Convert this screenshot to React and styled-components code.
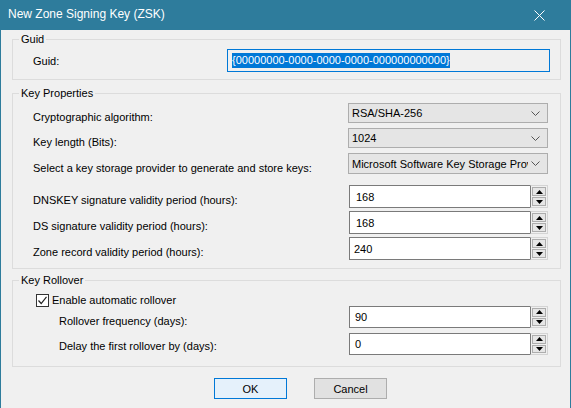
import React from "react";
import styled, { createGlobalStyle } from "styled-components";

const GlobalStyle = createGlobalStyle`
  html, body {
    margin: 0;
    padding: 0;
    background: #f0f0f0;
  }
  body {
    font-family: "Liberation Sans", Arial, sans-serif;
    font-size: 11px;
    color: #000;
  }
`;

const Window = styled.div`
  width: 571px;
  height: 408px;
  box-sizing: border-box;
  background: #f0f0f0;
  border-left: 1px solid #2e7c9c;
  border-right: 1px solid #2e7c9c;
  display: flex;
  flex-direction: column;
  overflow: hidden;
`;

const TitleBar = styled.div`
  height: 30px;
  flex: none;
  background: #2e7c9c;
  color: #fff;
  display: flex;
  align-items: center;
  justify-content: space-between;
  padding: 0 25px 0 7px;
  font-size: 12px;

  .title {
    padding-bottom: 3px;
  }
`;

const Body = styled.div`
  padding: 2px 9px 0 11px;
  display: flex;
  flex-direction: column;
`;

const Group = styled.fieldset`
  margin: ${(p) => p.$mt || 0}px 0 0;
  padding: ${(p) => p.$pt}px ${(p) => p.$pr}px ${(p) => p.$pb}px 20px;
  border: 1px solid #dcdcdc;
  min-width: 0;
  display: flex;
  flex-direction: column;
`;

const Legend = styled.legend`
  margin-left: -14px;
  padding: 0 2px;
  line-height: 14px;
  font-size: 11px;
`;

const Row = styled.div`
  display: flex;
  align-items: center;
  height: ${(p) => p.$h}px;
  margin-top: ${(p) => p.$mt || 0}px;
`;

const Label = styled.span`
  flex: 1;
  white-space: nowrap;
  padding-top: ${(p) => p.$shift || 0}px;
  padding-left: ${(p) => p.$indent || 0}px;
`;

const GuidField = styled.div`
  width: 323px;
  height: 100%;
  box-sizing: border-box;
  border: 1px solid #0078d7;
  background: #f0f0f0;
  display: flex;
  align-items: center;
  padding-left: 4px;

  span {
    background: #0078d7;
    color: #fff;
    line-height: 15px;
  }
`;

const Combo = styled.div`
  width: 200px;
  height: 100%;
  box-sizing: border-box;
  border: 1px solid #adadad;
  background: #e5e5e5;
  display: flex;
  align-items: center;
  padding: 0 7px 0 3px;

  .value {
    flex: 1;
    overflow: hidden;
    white-space: nowrap;
    margin-right: 3px;
  }
`;

const Spin = styled.div`
  width: 199px;
  height: 100%;
  display: flex;
`;

const SpinField = styled.div`
  flex: 1;
  box-sizing: border-box;
  background: #fff;
  border: 1px solid #7a7a7a;
  border-right: none;
  display: flex;
  align-items: center;
  padding-left: ${(p) => p.$pl || 6}px;
`;

const SpinButtons = styled.div`
  width: 18px;
  box-sizing: border-box;
  border: 1px solid #d4d4d4;
  border-left: 1px solid #7a7a7a;
  background: #f0f0f0;
  display: flex;
  flex-direction: column;
  gap: 1px;
  padding: 1px;
`;

const SpinButton = styled.div`
  flex: 1;
  border: 1px solid #adadad;
  background: #e6e6e6;
  display: flex;
  align-items: center;
  justify-content: center;
`;

const CheckRow = styled.label`
  display: flex;
  align-items: center;
  gap: 3px;
  height: 12px;
  margin: 7px 0 0 3px;
`;

const CheckBox = styled.span`
  width: 13px;
  height: 13px;
  box-sizing: border-box;
  border: 1px solid #333;
  background: #fff;
  display: flex;
  align-items: center;
  justify-content: center;
`;

const ButtonRow = styled.div`
  display: flex;
  gap: 27px;
  margin-top: 11px;
  padding-left: 202px;
`;

const Button = styled.button`
  width: 73px;
  height: 21px;
  box-sizing: border-box;
  font-family: inherit;
  font-size: 11px;
  color: #000;
  padding: 0;
  border: 1px solid ${(p) => (p.$default ? "#0078d7" : "#adadad")};
  background: ${(p) => (p.$default ? "#e5f1fb" : "#e1e1e1")};
`;

const Chevron = () => (
  <svg width="9" height="5" viewBox="0 0 9 5">
    <path d="M0.5 0.5 L4.5 4.5 L8.5 0.5" fill="none" stroke="#555" strokeWidth="1" />
  </svg>
);

const Arrow = ({ down }) => (
  <svg width="7" height="4" viewBox="0 0 7 4">
    <path d={down ? "M0 0 H7 L3.5 4 Z" : "M0 4 H7 L3.5 0 Z"} fill="#000" />
  </svg>
);

const Spinner = ({ value, pl }) => (
  <Spin>
    <SpinField $pl={pl}>{value}</SpinField>
    <SpinButtons>
      <SpinButton>
        <Arrow />
      </SpinButton>
      <SpinButton>
        <Arrow down />
      </SpinButton>
    </SpinButtons>
  </Spin>
);

const combos = [
  { label: "Cryptographic algorithm:", value: "RSA/SHA-256", h: 20, mt: 0, shift: 7 },
  { label: "Key length (Bits):", value: "1024", h: 20, mt: 5, shift: 8 },
  {
    label: "Select a key storage provider to generate and store keys:",
    value: "Microsoft Software Key Storage Provider",
    h: 21,
    mt: 5,
    shift: 9,
  },
];

const periods = [
  { label: "DNSKEY signature validity period (hours):", value: "168", mt: 11, pl: 6 },
  { label: "DS signature validity period (hours):", value: "168", mt: 3, pl: 6 },
  { label: "Zone record validity period (hours):", value: "240", mt: 3, pl: 4 },
];

export default function App() {
  return (
    <>
      <GlobalStyle />
      <Window>
        <TitleBar>
          <span className="title">New Zone Signing Key (ZSK)</span>
          <svg width="11" height="11" viewBox="0 0 11 11">
            <path d="M0.5 0.5 L10.5 10.5 M10.5 0.5 L0.5 10.5" stroke="#fff" strokeWidth="1" />
          </svg>
        </TitleBar>
        <Body>
          <Group $pt={3} $pr={10} $pb={7}>
            <Legend>Guid</Legend>
            <Row $h={23}>
              <Label>Guid:</Label>
              <GuidField>
                <span>{"{00000000-0000-0000-0000-000000000000}"}</span>
              </GuidField>
            </Row>
          </Group>

          <Group $mt={6} $pt={3} $pr={12} $pb={8}>
            <Legend>Key Properties</Legend>
            {combos.map((c) => (
              <Row key={c.label} $h={c.h} $mt={c.mt}>
                <Label $shift={c.shift}>{c.label}</Label>
                <Combo>
                  <span className="value">{c.value}</span>
                  <Chevron />
                </Combo>
              </Row>
            ))}
            {periods.map((p) => (
              <Row key={p.label} $h={23} $mt={p.mt}>
                <Label $shift={6}>{p.label}</Label>
                <Spinner value={p.value} pl={p.pl} />
              </Row>
            ))}
          </Group>

          <Group $mt={4} $pt={0} $pr={12} $pb={11}>
            <Legend>Key Rollover</Legend>
            <CheckRow>
              <CheckBox>
                <svg width="11" height="11" viewBox="0 0 11 11">
                  <path d="M1.5 5.5 L4.2 8.5 L9.5 1.8" fill="none" stroke="#222" strokeWidth="1.2" />
                </svg>
              </CheckBox>
              <span>Enable automatic rollover</span>
            </CheckRow>
            <Row $h={22}>
              <Label $indent={26} $shift={8}>Rollover frequency (days):</Label>
              <Spinner value="90" pl={5} />
            </Row>
            <Row $h={22} $mt={5}>
              <Label $indent={26} $shift={4}>Delay the first rollover by (days):</Label>
              <Spinner value="0" pl={5} />
            </Row>
          </Group>

          <ButtonRow>
            <Button $default>OK</Button>
            <Button>Cancel</Button>
          </ButtonRow>
        </Body>
      </Window>
    </>
  );
}
